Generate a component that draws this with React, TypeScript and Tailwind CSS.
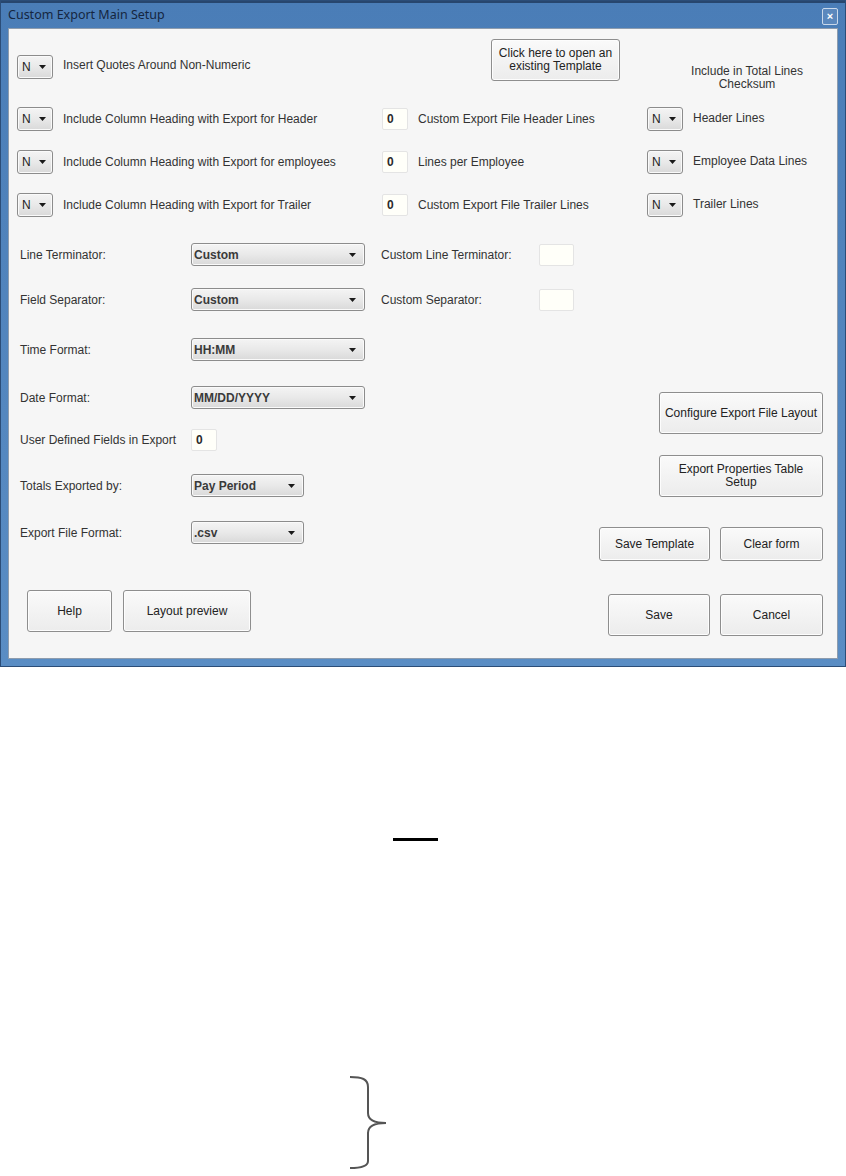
import React from 'react';

const font = "font-['Liberation_Sans',Arial,sans-serif]";

function Arrow() {
  return (
    <svg width="7" height="4" viewBox="0 0 7 4" className="shrink-0">
      <path d="M0 0h7L3.5 4z" fill="#1a1a1a" />
    </svg>
  );
}

function YesNo() {
  return (
    <div className="flex h-[24px] w-[36px] shrink-0 items-center justify-between rounded-[3px] border border-[#8c8c8c] bg-linear-to-b from-[#f4f4f4] via-[#e9e9e9] to-[#d9d9d9] pl-[4px] pr-[6px] text-[12px] text-[#222] shadow-[inset_0_0_0_1px_#fafafa]">
      <span>N</span>
      <Arrow />
    </div>
  );
}

function Combo({ value, w }: { value: string; w: string }) {
  return (
    <div
      className={`flex h-[23px] ${w} shrink-0 items-center justify-between rounded-[3px] border border-[#8c8c8c] bg-linear-to-b from-[#f4f4f4] via-[#e9e9e9] to-[#d9d9d9] pl-[2px] pr-[8px] text-[12px] font-bold text-[#3a3a3a] shadow-[inset_0_0_0_1px_#fafafa]`}
    >
      <span>{value}</span>
      <Arrow />
    </div>
  );
}

function Field({ value = '', w = 'w-[26px]' }: { value?: string; w?: string }) {
  return (
    <div className={`flex h-[22px] ${w} shrink-0 items-center rounded-[2px] border border-[#e4e4e4] bg-[#fffff9] pl-[4px] text-[12px] font-bold text-[#2a2a2a]`}>
      {value}
    </div>
  );
}

function Btn({ children, className = '' }: { children: React.ReactNode; className?: string }) {
  return (
    <div
      className={`flex shrink-0 items-center justify-center rounded-[3px] border border-[#8e8e8e] bg-linear-to-b from-[#fafafa] to-[#ececec] text-center text-[12px] leading-[13px] text-[#222] shadow-[inset_0_0_0_1px_#fdfdfd] ${className}`}
    >
      {children}
    </div>
  );
}

function CheckRow({ label, count, countLabel, sum }: { label: string; count: string; countLabel: string; sum: string }) {
  return (
    <div className="flex h-[24px] items-center">
      <YesNo />
      <span className="ml-[10px] w-[319px] text-[12px] text-[#333]">{label}</span>
      <Field value={count} />
      <span className="ml-[10px] w-[229px] text-[12px] text-[#333]">{countLabel}</span>
      <YesNo />
      <span className="ml-[10px] -mt-[2px] text-[12px] text-[#333]">{sum}</span>
    </div>
  );
}

function FormRow({ label, children, className = '' }: { label: string; children: React.ReactNode; className?: string }) {
  return (
    <div className={`flex h-[23px] items-center ${className}`}>
      <span className="ml-[3px] w-[171px] shrink-0 text-[12px] text-[#333]">{label}</span>
      {children}
    </div>
  );
}

export default function App() {
  return (
    <div className={`min-h-[1176px] bg-white ${font}`}>
      {/* Dialog window */}
      <div className="flex h-[667px] w-[846px] flex-col border border-[#2b4d78] bg-linear-to-b from-[#4a7db7] to-[#5a8dc4]">
        <div className="flex h-[27px] items-center justify-between border-t-2 border-[#27466e] pl-[7px] pr-[7px]">
          <span className="font-['Noto_Sans',sans-serif] text-[12.5px] text-[#15263f]">Custom Export Main Setup</span>
          <div className="mt-[2px] flex h-[17px] w-[16px] items-center justify-center rounded-[2px] border border-[#c9d8ea] bg-[#5b88bd] text-[11px] font-bold leading-none text-white">
            ×
          </div>
        </div>

        <div className="mx-[7px] mb-[7px] flex flex-1 flex-col border border-[#8d9cae] bg-[#f6f6f6] pl-[8px] pr-[14px] pt-[10px]">
          {/* top row */}
          <div className="flex h-[42px] items-start">
            <div className="mt-[16px] flex w-[474px] items-center">
              <YesNo />
              <span className="ml-[10px] -mt-[5px] text-[12px] text-[#333]">Insert Quotes Around Non-Numeric</span>
            </div>
            <Btn className="h-[42px] w-[129px]">
              Click here to open an
              <br />
              existing Template
            </Btn>
            <div className="ml-[57px] mt-[26px] w-[140px] text-center text-[12px] leading-[13px] text-[#333]">
              Include in Total Lines
              <br />
              Checksum
            </div>
          </div>

          <div className="mt-[26px] flex flex-col gap-[19px]">
            <CheckRow label="Include Column Heading with Export for Header" count="0" countLabel="Custom Export File Header Lines" sum="Header Lines" />
            <CheckRow label="Include Column Heading with Export for employees" count="0" countLabel="Lines per Employee" sum="Employee Data Lines" />
            <CheckRow label="Include Column Heading with Export for Trailer" count="0" countLabel="Custom Export File Trailer Lines" sum="Trailer Lines" />
          </div>

          {/* lower section */}
          <div className="mt-[26px] flex">
            <div className="flex flex-1 flex-col">
              <FormRow label="Line Terminator:">
                <Combo value="Custom" w="w-[174px]" />
                <span className="ml-[16px] w-[158px] text-[12px] text-[#333]">Custom Line Terminator:</span>
                <Field w="w-[35px]" />
              </FormRow>
              <FormRow label="Field Separator:" className="mt-[22px]">
                <Combo value="Custom" w="w-[174px]" />
                <span className="ml-[16px] w-[158px] text-[12px] text-[#333]">Custom Separator:</span>
                <Field w="w-[35px]" />
              </FormRow>
              <FormRow label="Time Format:" className="mt-[27px]">
                <Combo value="HH:MM" w="w-[174px]" />
              </FormRow>
              <FormRow label="Date Format:" className="mt-[25px]">
                <Combo value="MM/DD/YYYY" w="w-[174px]" />
              </FormRow>
              <FormRow label="User Defined Fields in Export" className="mt-[19px]">
                <Field value="0" />
              </FormRow>
              <FormRow label="Totals Exported by:" className="mt-[23px]">
                <Combo value="Pay Period" w="w-[113px]" />
              </FormRow>
              <FormRow label="Export File Format:" className="mt-[24px]">
                <Combo value=".csv" w="w-[113px]" />
              </FormRow>
            </div>

            <div className="flex w-[224px] flex-col items-end pt-[149px]">
              <Btn className="h-[42px] w-[164px]">Configure Export File Layout</Btn>
              <Btn className="mt-[21px] h-[42px] w-[164px]">
                Export Properties Table
                <br />
                Setup
              </Btn>
              <div className="mt-[30px] flex gap-[10px]">
                <Btn className="h-[34px] w-[111px]">Save Template</Btn>
                <Btn className="h-[34px] w-[103px]">Clear form</Btn>
              </div>
            </div>
          </div>

          {/* footer */}
          <div className="mt-[29px] flex items-start">
            <Btn className="ml-[10px] h-[42px] w-[85px]">Help</Btn>
            <Btn className="ml-[11px] h-[42px] w-[128px]">Layout preview</Btn>
            <Btn className="ml-auto mt-[4px] h-[42px] w-[102px] border-[#3a9ad8] shadow-[inset_0_0_0_1px_#a9dbf6]">Save</Btn>
            <Btn className="ml-[10px] mt-[4px] h-[42px] w-[103px]">Cancel</Btn>
          </div>
        </div>
      </div>

      {/* marks below the window */}
      <div className="ml-[393px] mt-[171px] h-[3px] w-[45px] bg-black" />
      <svg width="40" height="96" viewBox="0 0 40 96" className="ml-[348px] mt-[234px] block">
        <path
          d="M2 2 C14 2 20 4 20 12 L20 38 C20 44 26 48 38 48 C26 48 20 52 20 58 L20 86 C20 91 14 93 2 93"
          fill="none"
          stroke="#555"
          strokeWidth="2"
        />
      </svg>
    </div>
  );
}
